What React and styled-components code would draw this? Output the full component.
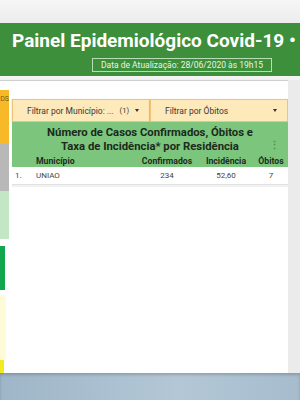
import React from 'react'
import styled, { createGlobalStyle } from 'styled-components'

const GlobalStyle = createGlobalStyle`
  html, body {
    margin: 0;
    padding: 0;
    background: #f1f1f1;
    font-family: Roboto, "Liberation Sans", Arial, sans-serif;
  }
`

const Page = styled.div`
  width: 300px;
  height: 400px;
  display: flex;
  flex-direction: column;
  overflow: hidden;
  background: #f0f0f0;
`

const TopStrip = styled.div`
  height: 23px;
  flex-shrink: 0;
  background: linear-gradient(#f6f6f6, #ececec);
`

const Banner = styled.header`
  height: 53px;
  flex-shrink: 0;
  background: #3d8f3b;
  display: flex;
  flex-direction: column;
  align-items: flex-start;
  padding-left: 12px;
  box-sizing: border-box;
`

const Title = styled.h1`
  margin: 4px 0 0;
  color: #fff;
  font-size: 19px;
  font-weight: 700;
  white-space: nowrap;
  line-height: 28px;
`

const DateBox = styled.div`
  margin: 3px 0 0 80px;
  width: 180px;
  height: 14px;
  box-sizing: border-box;
  border: 1px solid #b9dcb5;
  color: #e9f4e7;
  font-size: 8.5px;
  line-height: 12px;
  text-align: center;
  white-space: nowrap;
`

const Body = styled.div`
  height: 297px;
  flex-shrink: 0;
  display: flex;
  padding-top: 4px;
  box-sizing: border-box;
  background: #f3f3f3;
`

const Sheet = styled.div`
  width: 288px;
  height: 293px;
  background: #fff;
  border-top: 1px solid #cfcfcf;
  box-shadow: 0 1px 2px rgba(0, 0, 0, 0.15);
  display: flex;
`

const RightGutter = styled.div`
  width: 12px;
  height: 293px;
  background: #ebebeb;
`

const Desktop = styled.div`
  flex: 1;
  background: linear-gradient(90deg, #9fb6c8, #b3c7d6 60%, #a6bccd);
  box-shadow: inset 0 2px 3px rgba(0, 0, 0, 0.18);
`

const Legend = styled.div`
  width: 10px;
  display: flex;
  flex-direction: column;
  padding-top: 9px;
`

const LegendBar = styled.div`
  width: ${p => p.w || 9}px;
  height: ${p => p.h}px;
  margin-top: ${p => p.gap || 0}px;
  background: ${p => p.bg};
  font-size: 7px;
  color: #7a5a10;
  overflow: hidden;
  line-height: 18px;
  text-align: right;
`

const Main = styled.div`
  flex: 1;
  padding-top: 18px;
  padding-left: 2px;
  display: flex;
  flex-direction: column;
`

const Filters = styled.div`
  display: grid;
  grid-template-columns: 138px 138px;
  height: 23px;
`

const Filter = styled.div`
  background: #fde9b9;
  border: 1px solid #f3c172;
  box-shadow: 0 1px 2px rgba(180, 120, 20, 0.35);
  display: flex;
  align-items: center;
  padding: 0 10px 0 14px;
  font-size: 8.5px;
  color: #3a3a3a;
  white-space: nowrap;
  box-sizing: border-box;
`

const FilterLabel = styled.span`
  flex: 1;
`

const Count = styled.span`
  font-size: 7.5px;
  margin-right: 6px;
`

const Caret = styled.span`
  width: 0;
  height: 0;
  border-left: 2.5px solid transparent;
  border-right: 2.5px solid transparent;
  border-top: 3px solid #333;
`

const Table = styled.div`
  width: 276px;
  display: flex;
  flex-direction: column;
`

const TableHead = styled.div`
  background: #7cc57d;
  position: relative;
  padding-top: 4px;
`

const TableTitle = styled.div`
  text-align: center;
  font-size: 11.3px;
  font-weight: 700;
  line-height: 13.5px;
  color: #1b2a1b;
  padding: 0 18px;
  height: 28px;
`

const Kebab = styled.span`
  position: absolute;
  right: 8px;
  top: 19px;
  color: #5a8f5a;
  font-size: 11px;
  line-height: 10px;
  font-weight: 700;
`

const Grid = styled.div`
  display: grid;
  grid-template-columns: 24px 1fr 62px 56px 34px;
  align-items: center;
  height: ${p => p.h}px;
  font-size: ${p => (p.head ? 8.7 : 8)}px;
  font-weight: ${p => (p.head ? 700 : 400)};
  color: ${p => (p.head ? '#1e2e1e' : '#444')};
  background: ${p => (p.head ? '#7cc57d' : '#fff')};
  border-bottom: ${p => (p.head ? 'none' : '1px solid #e2e2e2')};
`

const Cell = styled.span`
  text-align: ${p => p.align || 'left'};
  padding-left: ${p => p.pl || 0}px;
  white-space: nowrap;
`

const Tail = styled.div`
  height: 2px;
  background: #f0f0f0;
`

export default function App() {
  return (
    <Page>
      <GlobalStyle />
      <TopStrip />
      <Banner>
        <Title>Painel Epidemiológico Covid-19 •</Title>
        <DateBox>Data de Atualização: 28/06/2020 às 19h15</DateBox>
      </Banner>
      <Body>
        <Sheet>
          <Legend>
            <LegendBar h={55} bg="#f7b928">DS</LegendBar>
            <LegendBar h={48} bg="#b8b8b8" />
            <LegendBar h={49} bg="#c3e6c4" />
            <LegendBar h={45} w={5} gap={7} bg="#12a64e" />
            <LegendBar h={66} w={6} gap={5} bg="#fdfbd8" />
            <LegendBar h={14} w={4} bg="#f4ea20" />
          </Legend>
          <Main>
            <Filters>
              <Filter>
                <FilterLabel>Filtrar por Município: ...</FilterLabel>
                <Count>(1)</Count>
                <Caret />
              </Filter>
              <Filter>
                <FilterLabel>Filtrar por Óbitos</FilterLabel>
                <Caret />
              </Filter>
            </Filters>
            <Table>
              <TableHead>
                <TableTitle>
                  Número de Casos Confirmados, Óbitos e
                  <br />
                  Taxa de Incidência* por Residência
                </TableTitle>
                <Kebab>⋮</Kebab>
              </TableHead>
              <Grid head h={13}>
                <Cell />
                <Cell>Município</Cell>
                <Cell align="center">Confirmados</Cell>
                <Cell align="center">Incidência</Cell>
                <Cell align="center">Óbitos</Cell>
              </Grid>
              <Grid h={17}>
                <Cell pl={3}>1.</Cell>
                <Cell>UNIAO</Cell>
                <Cell align="center">234</Cell>
                <Cell align="center">52,60</Cell>
                <Cell align="center">7</Cell>
              </Grid>
              <Tail />
            </Table>
          </Main>
        </Sheet>
        <RightGutter />
      </Body>
      <Desktop />
    </Page>
  )
}
